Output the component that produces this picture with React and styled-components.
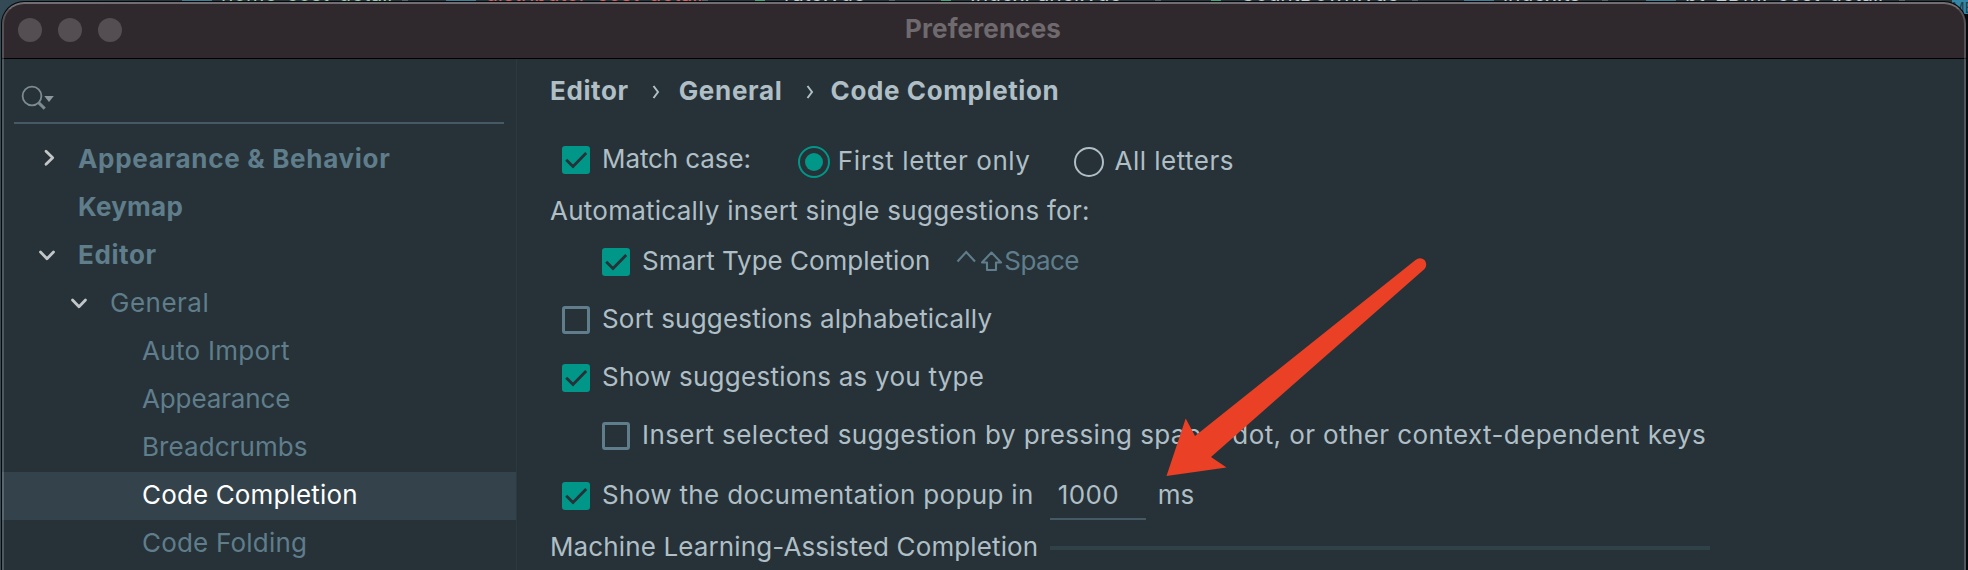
import React from 'react';
import styled, { createGlobalStyle, css } from 'styled-components';

const color = {
  panel: '#263238',
  header: '#2f292d',
  selected: '#34434b',
  muted: '#607d8b',
  text: '#b0bec5',
  accent: '#009688',
  line: '#455a64',
  separator: '#314148',
};

const Global = createGlobalStyle`
  * { box-sizing: border-box; }
  body {
    margin: 0;
    overflow: hidden;
    background: #1b262b;
    font-family: Inter, "Liberation Sans", sans-serif;
    font-size: 26px;
    line-height: 32px;
  }
`;

const Desktop = styled.div`
  position: relative;
  width: 1968px;
  height: 570px;
  overflow: hidden;
  background: linear-gradient(90deg, #344b57 0, #27363d 150px, #27343a 1960px, #05090b 1964px);
`;

const TabStrip = styled.div`
  display: flex;
  height: 24px;
  margin-bottom: -22px;
  padding-left: 182px;
  overflow: hidden;
`;

const Tab = styled.div`
  display: flex;
  flex: none;
  width: ${(p) => p.$width}px;
  gap: 9px;
`;

const TabIcon = styled.span`
  flex: none;
  width: ${(p) => (p.$vue ? 10 : 30)}px;
  height: 2px;
  margin-right: ${(p) => (p.$vue ? 10 : 0)}px;
  background: ${(p) => (p.$vue ? '#41a878' : '#3f7f96')};
`;

const TabName = styled.span`
  width: ${(p) => p.$width}px;
  height: 24px;
  margin-top: -22px;
  line-height: 32px;
  font-size: 21px;
  white-space: nowrap;
  color: ${(p) => p.$tone};
`;

const TabClose = styled.span`
  width: 6px;
  height: 1px;
  margin-left: 11px;
  background: #56646b;
`;

const CornerTab = styled.div`
  flex: none;
  width: 16px;
  height: 14px;
  overflow: hidden;
  background: #3288a6;
  color: #23424f;
  font-size: 14px;
  line-height: 15px;
  text-align: right;
`;

const Window = styled.div`
  position: relative;
  display: flex;
  flex-direction: column;
  height: 600px;
  margin: 0 2px;
  overflow: hidden;
  border-radius: 22px 22px 0 0;
  background: ${color.panel};
  box-shadow: 0 0 0 1px #05080a;

  &::after {
    content: '';
    position: absolute;
    inset: 0;
    border: 2px solid rgba(255, 255, 255, 0.19);
    border-top-color: rgba(255, 255, 255, 0.32);
    border-radius: inherit;
    pointer-events: none;
  }
`;

const TitleBar = styled.header`
  display: grid;
  grid-template-columns: 1fr auto 1fr;
  align-items: center;
  flex: none;
  height: 57px;
  padding: 0 18px 0 16px;
  border-bottom: 1px solid #000;
  background: ${color.header};
`;

const WindowButtons = styled.div`
  display: flex;
  gap: 16px;
`;

const WindowButton = styled.span`
  width: 24px;
  height: 24px;
  border-radius: 50%;
  background: #544e52;
`;

const Title = styled.h1`
  margin: 0 0 2px;
  font-size: 26px;
  line-height: 32px;
  font-weight: 700;
  letter-spacing: 0.12px;
  color: #6f6a6e;
`;

const Body = styled.div`
  display: flex;
  flex: 1;
`;

const Sidebar = styled.nav`
  flex: none;
  width: 514px;
`;

const Search = styled.div`
  display: flex;
  align-items: flex-start;
  height: 65px;
  margin: 0 12px 12px;
  padding: 26px 0 0 7px;
  border-bottom: 2px solid ${color.line};
`;

const TreeRow = styled.div`
  display: flex;
  align-items: center;
  height: 48px;
  padding-left: ${(p) => 29 + p.$level * 32}px;
  background: ${(p) => (p.$selected ? color.selected : 'transparent')};
  color: ${(p) => (p.$selected ? '#fff' : color.muted)};
  font-weight: ${(p) => (p.$level === 0 ? 700 : 400)};
`;

const TreeArrow = styled.span`
  display: flex;
  flex: none;
  width: 47px;
  height: 24px;
`;

const Text = styled.span`
  flex: none;
  white-space: nowrap;
  margin-bottom: 3px;
  letter-spacing: ${(p) => p.$tracking || 0}px;
`;

const Content = styled.main`
  flex: 1;
  padding-left: 33px;
  border-left: 1px solid #2c393f;
  color: ${color.text};
`;

const Breadcrumb = styled.div`
  display: flex;
  align-items: center;
  height: 66px;
  margin-bottom: 7px;
  font-weight: 700;
`;

const Row = styled.div`
  display: flex;
  align-items: center;
  height: ${(p) => p.$height || 58}px;
  padding-top: ${(p) => p.$drop || 0}px;
  padding-left: ${(p) => [0, 12, 52][p.$indent || 0]}px;
`;

const Box = styled.span`
  display: flex;
  flex: none;
  width: 28px;
  height: 28px;
  margin-right: 12px;
  border-radius: 3px;
  ${(p) =>
    p.$checked
      ? css`
          background: ${color.accent};
        `
      : css`
          border: 3px solid ${color.muted};
        `}
`;

const RadioOption = styled.div`
  display: flex;
  align-items: center;
  height: 34px;
  margin: ${(p) => (p.$checked ? '3px 43px 0 47px' : '4px 0 0')};
`;

const Radio = styled.span`
  display: flex;
  align-items: center;
  justify-content: center;
  width: ${(p) => (p.$checked ? 32 : 30)}px;
  height: ${(p) => (p.$checked ? 32 : 30)}px;
  margin-right: ${(p) => (p.$checked ? 8 : 11)}px;
  border: 2px solid ${(p) => (p.$checked ? color.accent : color.text)};
  border-radius: 50%;

  &::after {
    content: '';
    width: 18px;
    height: 18px;
    border-radius: 50%;
    background: ${(p) => (p.$checked ? color.accent : 'transparent')};
  }
`;

const RadioLabel = styled(Text)`
  margin-bottom: 2px;
`;

const Shortcut = styled.span`
  display: flex;
  align-items: center;
  margin-left: 26px;
  color: ${color.muted};
`;

const NumberField = styled.span`
  width: 96px;
  height: 48px;
  margin: 0 12px 0 16px;
  padding: 7px 0 0 8px;
  border-bottom: 2px solid ${color.line};
  letter-spacing: 0.4px;
`;

const SectionLine = styled.span`
  width: 660px;
  height: 4px;
  margin-left: 12px;
  background: ${color.separator};
`;

const Pointer = styled.svg`
  position: absolute;
  left: 1160px;
  top: 250px;
`;

const SearchIcon = () => (
  <svg width="34" height="28" viewBox="0 0 34 28" fill="none">
    <circle cx="11" cy="11" r="9.4" stroke="#7c8a91" strokeWidth="1.8" />
    <path d="M17.6 17.6L23.7 23.6" stroke="#7c8a91" strokeWidth="3" />
    <path d="M23.3 11h9.5L28 17z" fill="#8b979d" />
  </svg>
);

const Chevron = ({ open }) => (
  <svg width="28" height="24" viewBox="0 0 28 24" fill="none" stroke="#c3c6c8" strokeWidth="2.8" strokeLinecap="round" strokeLinejoin="round">
    <path d={open ? 'M9.5 8L16 14.8L22.5 8' : 'M15 3.2L21.7 9.7L15 16.2'} />
  </svg>
);

const CrumbArrow = ({ width }) => (
  <svg width={width} height="32" viewBox={`0 0 ${width} 32`} fill="none" stroke={color.text} strokeWidth="2">
    <path d="M24.5 10L29 16L24.5 22" />
  </svg>
);

const Check = () => (
  <svg width="28" height="28" viewBox="0 0 28 28" fill="none" stroke={color.panel} strokeWidth="2.8">
    <path d="M4.2 13.8L11 20.5L24.2 7" />
  </svg>
);

const ShortcutKeys = () => (
  <svg width="48" height="28" viewBox="0 0 48 28" fill="none" stroke={color.muted} strokeWidth="2.1">
    <path d="M1.500 13.5L10.200 4L19 13.5" />
    <path d="M35.500 4.500L45 14.500H40V22H31V14.500H26Z" strokeLinejoin="round" />
  </svg>
);

const CheckBox = ({ checked }) => <Box $checked={checked}>{checked && <Check />}</Box>;

const tabs = [
  { name: 'home_cost_detail', width: 264, textWidth: 161, tone: '#9ccfae' },
  { name: 'distributor_cost_detail', width: 309, textWidth: 197, tone: '#e0605e' },
  { name: 'rate.vue', width: 186, textWidth: 85, tone: '#c3cdd2', vue: true },
  { name: 'IndexPanel.vue', width: 270, textWidth: 165, tone: '#c3cdd2', vue: true },
  { name: 'CountDown.vue', width: 253, textWidth: 152, tone: '#c3cdd2', vue: true },
  { name: 'index.ts', width: 182, textWidth: 79, tone: '#c3cdd2' },
  { name: 'pt_EDMI_cost_detail', width: 306, textWidth: 194, tone: '#c3cdd2' },
];

const tree = [
  { label: 'Appearance & Behavior', level: 0, arrow: 'closed', tracking: 0.7 },
  { label: 'Keymap', level: 0, tracking: 0.26 },
  { label: 'Editor', level: 0, arrow: 'open', tracking: 0.6 },
  { label: 'General', level: 1, arrow: 'open', tracking: 0.5 },
  { label: 'Auto Import', level: 2, tracking: 0.3 },
  { label: 'Appearance', level: 2, tracking: -0.12 },
  { label: 'Breadcrumbs', level: 2, tracking: 0.07 },
  { label: 'Code Completion', level: 2, selected: true, tracking: 0.15 },
  { label: 'Code Folding', level: 2, tracking: 0.2 },
];

export default function App() {
  return (
    <>
      <Global />
      <Desktop>
        <TabStrip>
          {tabs.map((t) => (
            <Tab key={t.name} $width={t.width}>
              <TabIcon $vue={t.vue} />
              <TabName $width={t.textWidth} $tone={t.tone}>{t.name}</TabName>
              <TabClose />
            </Tab>
          ))}
          <CornerTab>ME</CornerTab>
        </TabStrip>
        <Window>
          <TitleBar>
            <WindowButtons>
              <WindowButton />
              <WindowButton />
              <WindowButton />
            </WindowButtons>
            <Title>Preferences</Title>
          </TitleBar>
          <Body>
            <Sidebar>
              <Search>
                <SearchIcon />
              </Search>
              {tree.map((n) => (
                <TreeRow key={n.label} $level={n.level} $selected={n.selected}>
                  <TreeArrow>{n.arrow && <Chevron open={n.arrow === 'open'} />}</TreeArrow>
                  <Text $tracking={n.tracking}>{n.label}</Text>
                </TreeRow>
              ))}
            </Sidebar>
            <Content>
              <Breadcrumb>
                <Text $tracking={0.6}>Editor</Text>
                <CrumbArrow width={50} />
                <Text $tracking={0.7}>General</Text>
                <CrumbArrow width={48} />
                <Text $tracking={0.6}>Code Completion</Text>
              </Breadcrumb>
              <Row $indent={1} $height={56}>
                <CheckBox checked />
                <Text $tracking={-0.1}>Match case:</Text>
                <RadioOption $checked>
                  <Radio $checked />
                  <RadioLabel $tracking={0.58}>First letter only</RadioLabel>
                </RadioOption>
                <RadioOption>
                  <Radio />
                  <RadioLabel $tracking={0.48}>All letters</RadioLabel>
                </RadioOption>
              </Row>
              <Row $height={45} $drop={3}>
                <Text $tracking={0.25}>Automatically insert single suggestions for:</Text>
              </Row>
              <Row $indent={2}>
                <CheckBox checked />
                <Text $tracking={-0.02}>Smart Type Completion</Text>
                <Shortcut>
                  <ShortcutKeys />
                  <Text $tracking={-0.6}>Space</Text>
                </Shortcut>
              </Row>
              <Row $indent={1}>
                <CheckBox />
                <Text $tracking={0.18}>Sort suggestions alphabetically</Text>
              </Row>
              <Row $indent={1}>
                <CheckBox checked />
                <Text $tracking={0.25}>Show suggestions as you type</Text>
              </Row>
              <Row $indent={2}>
                <CheckBox />
                <Text $tracking={0.41}>
                  Insert selected suggestion by pressing space, dot, or other context-dependent keys
                </Text>
              </Row>
              <Row $indent={1} $height={62}>
                <CheckBox checked />
                <Text $tracking={0.34}>Show the documentation popup in</Text>
                <NumberField>1000</NumberField>
                <Text>ms</Text>
              </Row>
              <Row $height={42}>
                <Text $tracking={0.12}>Machine Learning-Assisted Completion</Text>
                <SectionLine />
              </Row>
            </Content>
          </Body>
        </Window>
        <Pointer width="280" height="240" viewBox="1160 250 280 240">
          <path
            d="M1415.5 260Q1420 256.500 1424.500 260Q1428 264.500 1424.500 269L1211 457L1226.500 467.500L1166.500 476L1185.700 418.500L1195 436Z"
            fill="#ea4025"
          />
        </Pointer>
      </Desktop>
    </>
  );
}
